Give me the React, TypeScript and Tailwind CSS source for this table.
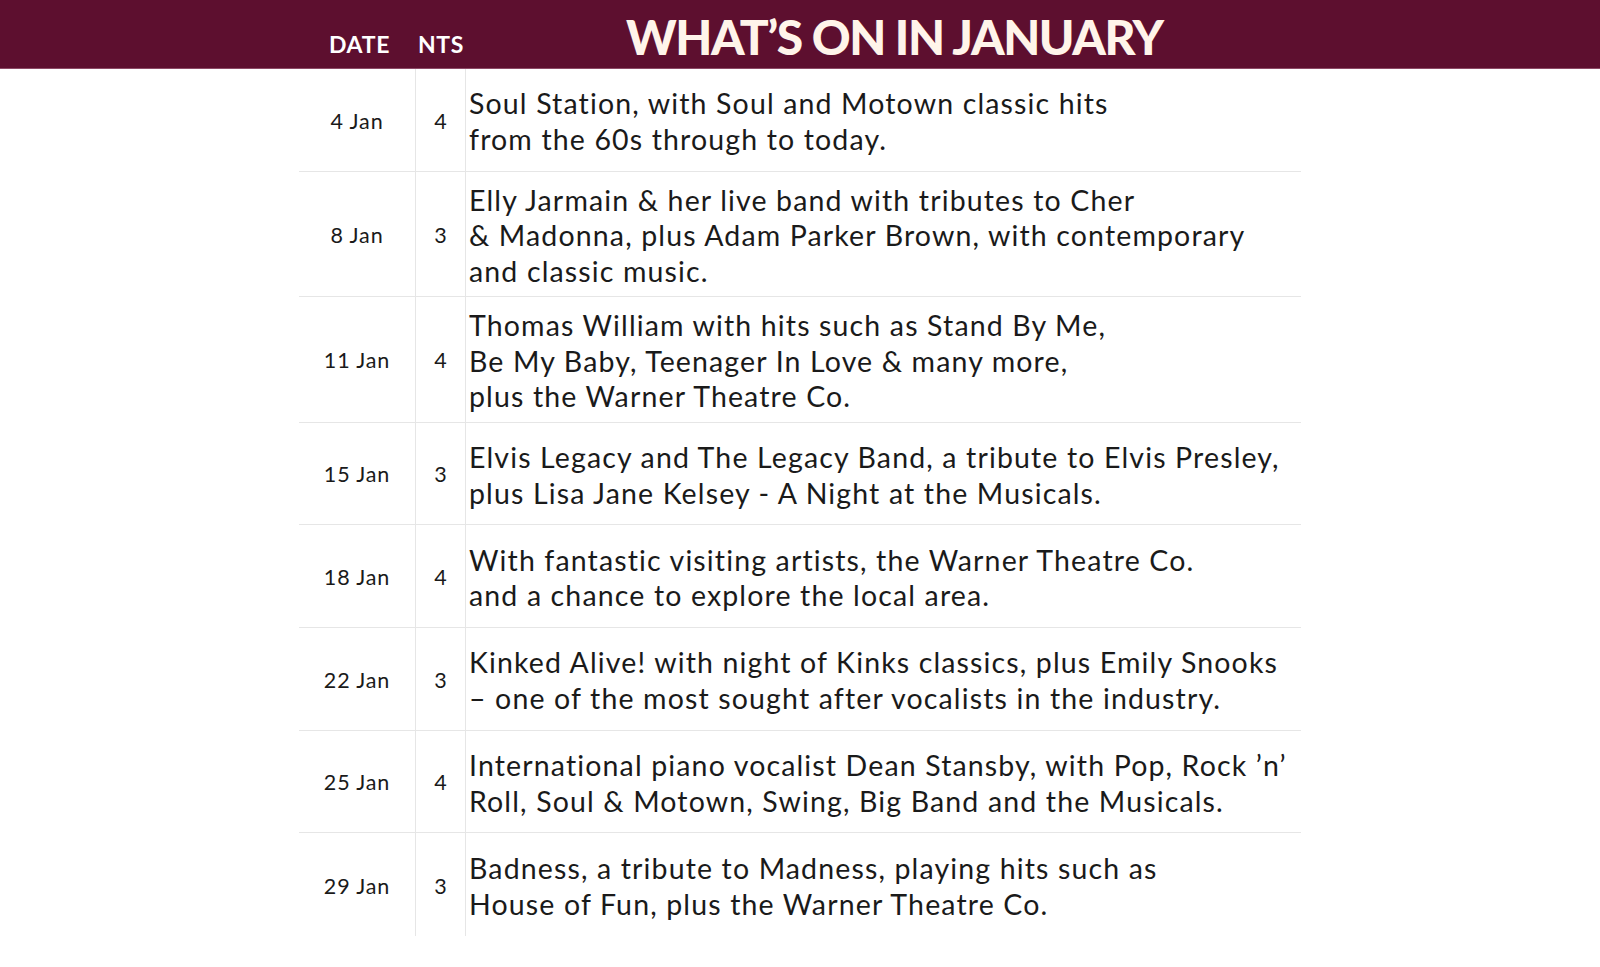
const events = [
  { date: '4 Jan', nights: 4, lines: ['Soul Station, with Soul and Motown classic hits', 'from the 60s through to today.'] },
  {
    date: '8 Jan',
    nights: 3,
    lines: [
      'Elly Jarmain & her live band with tributes to Cher',
      '& Madonna, plus Adam Parker Brown, with contemporary',
      'and classic music.',
    ],
  },
  {
    date: '11 Jan',
    nights: 4,
    lines: [
      'Thomas William with hits such as Stand By Me,',
      'Be My Baby, Teenager In Love & many more,',
      'plus the Warner Theatre Co.',
    ],
  },
  {
    date: '15 Jan',
    nights: 3,
    lines: [
      'Elvis Legacy and The Legacy Band, a tribute to Elvis Presley,',
      'plus Lisa Jane Kelsey - A Night at the Musicals.',
    ],
  },
  {
    date: '18 Jan',
    nights: 4,
    lines: ['With fantastic visiting artists, the Warner Theatre Co.', 'and a chance to explore the local area.'],
  },
  {
    date: '22 Jan',
    nights: 3,
    lines: [
      'Kinked Alive! with night of Kinks classics, plus Emily Snooks',
      '\u2013 one of the most sought after vocalists in the industry.',
    ],
  },
  {
    date: '25 Jan',
    nights: 4,
    lines: [
      'International piano vocalist Dean Stansby, with Pop, Rock \u2019n\u2019',
      'Roll, Soul & Motown, Swing, Big Band and the Musicals.',
    ],
  },
  {
    date: '29 Jan',
    nights: 3,
    lines: ['Badness, a tribute to Madness, playing hits such as', 'House of Fun, plus the Warner Theatre Co.'],
  },
];

export default function App() {
  return (
    <div className="min-h-[967px] w-[1600px] bg-white text-[#1a1a1a] [font-family:Lato,'Noto_Sans',sans-serif]">
      <header className="h-[69px] bg-[#5d0f2f] border-b border-[#8c4a66]">
        <div className="mx-auto flex h-full w-[1002px] items-end">
          <div className="w-[117px] pb-[12px] pl-[4px] text-center text-[23px] font-bold leading-none tracking-[0.03em] text-white">
            DATE
          </div>
          <div className="w-[50px] pb-[12px] text-center text-[23px] font-bold leading-none tracking-[0.03em] text-white">
            NTS
          </div>
          <h1 className="flex-1 pb-[7px] pl-[160px] text-[48px] font-black leading-none tracking-[-0.03em] text-[#fff4ea]">
            WHAT’S ON IN JANUARY
          </h1>
        </div>
      </header>

      <div className="mx-auto w-[1002px]">
        {events.map((event, i) => (
          <div
            key={event.date}
            className={`flex min-h-[102.7px] ${i < events.length - 1 ? 'border-b border-[#e6e6e6]' : ''}`}
          >
            <div className="flex w-[117px] items-center justify-center border-r border-[#e6e6e6] pt-[2px] text-[21.5px] tracking-[0.04em]">
              {event.date}
            </div>
            <div className="flex w-[50px] items-center justify-center border-r border-[#e6e6e6] pt-[2px] text-[21.5px]">
              {event.nights}
            </div>
            <div className="flex flex-1 flex-col justify-center pt-[11px] pb-[7px] pl-[3px] text-[28.5px] leading-[35.5px] tracking-[0.04em]">
              {event.lines.map((line) => (
                <div key={line} className="whitespace-nowrap">
                  {line}
                </div>
              ))}
            </div>
          </div>
        ))}
      </div>
    </div>
  );
}
